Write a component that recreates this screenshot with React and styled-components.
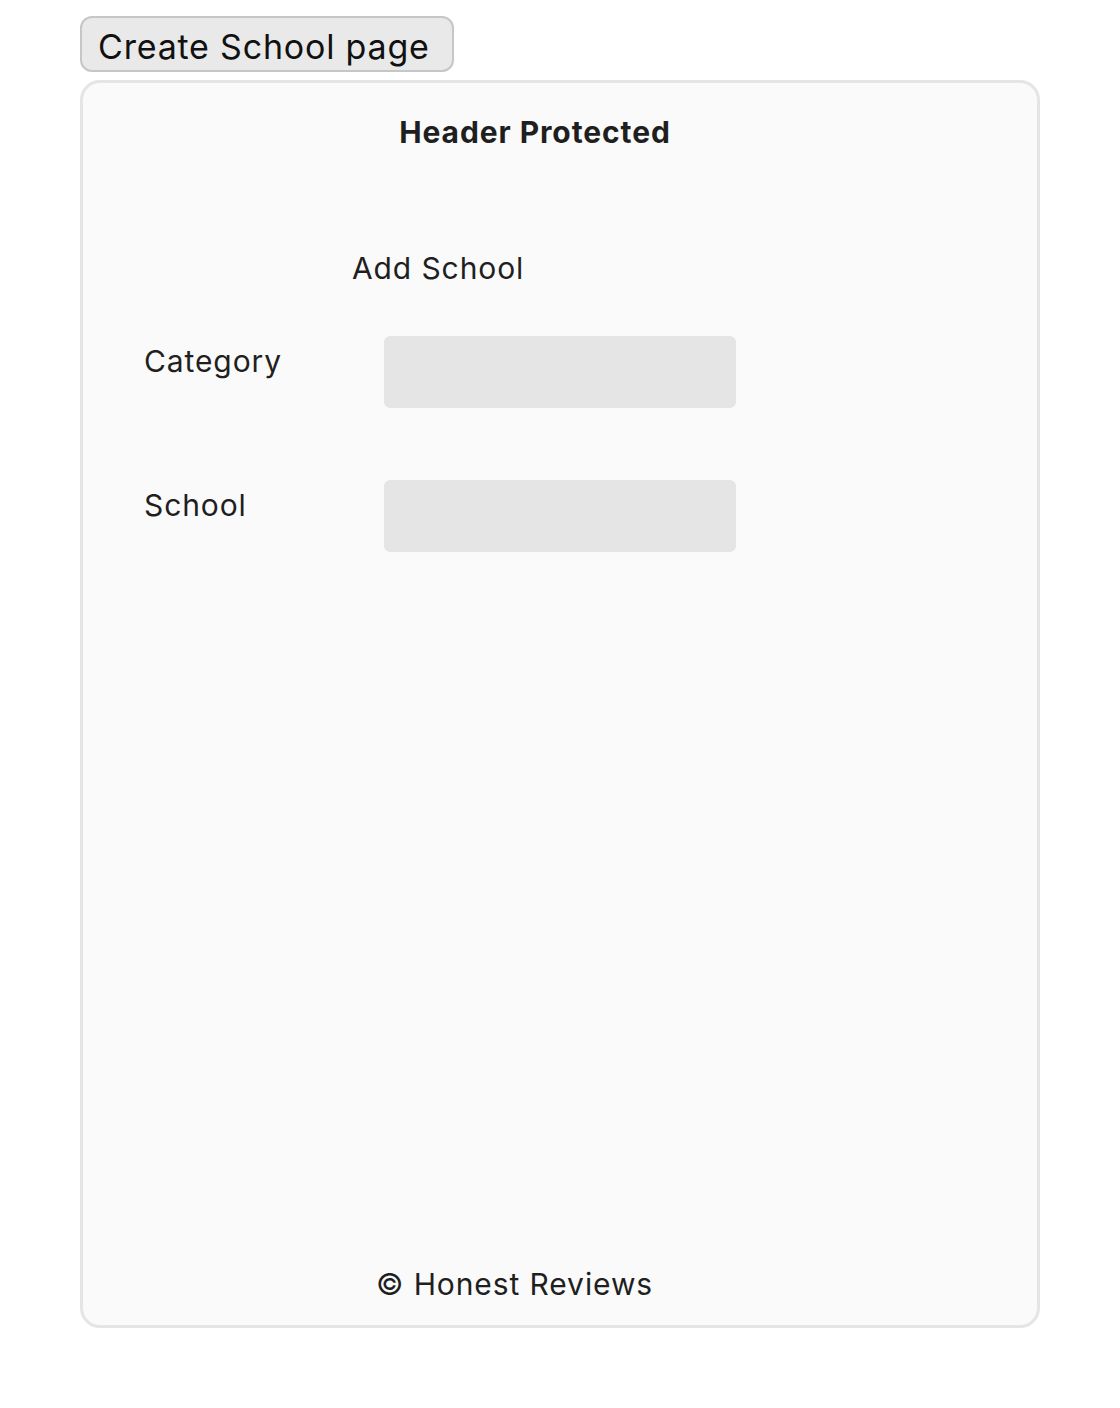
import styled, { createGlobalStyle } from 'styled-components';

const GlobalStyle = createGlobalStyle`
	html, body {
		margin: 0;
		background: #ffffff;
		font-family: Inter, 'Noto Sans', sans-serif;
		color: #1f1f1f;
	}
`;

const Page = styled.div`
	padding: 16px 80px 0 80px;
	display: flex;
	flex-direction: column;
	align-items: flex-start;
	gap: 8px;
`;

const TopButton = styled.button`
	box-sizing: border-box;
	height: 56px;
	padding: 5px 22px 0 16px;
	font-family: Inter, sans-serif;
	font-size: 34px;
	letter-spacing: 0.8px;
	color: #111;
	background: #e9e9e9;
	border: 2px solid #c6c6c6;
	border-radius: 12px;
`;

const Card = styled.div`
	box-sizing: border-box;
	width: 960px;
	height: 1248px;
	background: #fafafa;
	border: 3px solid #e5e5e5;
	border-radius: 20px;
	display: flex;
	flex-direction: column;
	font-size: 30px;
	letter-spacing: 0.9px;
`;

const Header = styled.header`
	padding: 31px 50px 0 0;
	text-align: center;
	font-weight: 700;
`;

const Main = styled.main`
	padding: 100px 0 0 61px;
	display: flex;
	flex-direction: column;
`;

const Title = styled.h2`
	margin: 0 0 50px 208px;
	font-size: 30px;
	font-weight: 400;
`;

const Field = styled.div`
	display: grid;
	grid-template-columns: 240px 352px;
	align-items: start;
	margin-bottom: 72px;
`;

const Label = styled.label`
	padding-top: 7px;
`;

const Input = styled.div`
	height: 72px;
	background: #e5e5e5;
	border-radius: 6px;
`;

const Footer = styled.footer`
	margin-top: auto;
	padding: 0 0 23px 293px;
`;

export default function App() {
	return (
		<>
			<GlobalStyle />
			<Page>
				<TopButton>Create School page</TopButton>
				<Card>
					<Header>Header Protected</Header>
					<Main>
						<Title>Add School</Title>
						<Field>
							<Label>Category</Label>
							<Input />
						</Field>
						<Field>
							<Label>School</Label>
							<Input />
						</Field>
					</Main>
					<Footer>© Honest Reviews</Footer>
				</Card>
			</Page>
		</>
	);
}
